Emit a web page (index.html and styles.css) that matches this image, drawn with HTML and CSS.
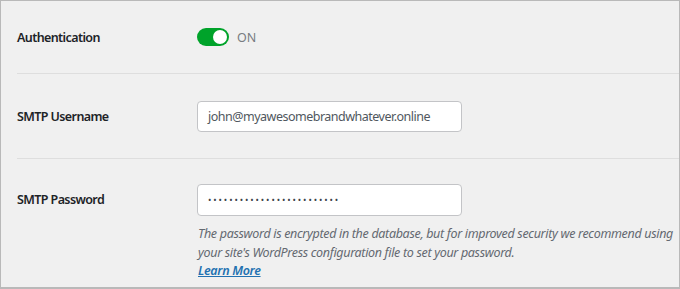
FILE: index.html
```html
<!DOCTYPE html>
<html>
<head>
<meta charset="utf-8">
<link rel="stylesheet" href="styles.css">
</head>
<body>
<div class="frame">
  <div class="row row-auth">
    <div class="label">Authentication</div>
    <div class="field">
      <span class="toggle"><span class="knob"></span></span>
      <span class="toggle-text">ON</span>
    </div>
  </div>
  <div class="row row-user">
    <div class="label">SMTP Username</div>
    <div class="field">
      <div class="input">john@myawesomebrandwhatever.online</div>
    </div>
  </div>
  <div class="row row-pass">
    <div class="label label-pass">SMTP Password</div>
    <div class="field">
      <div class="input input-pass">•••••••••••••••••••••••••</div>
      <p class="desc">The password is encrypted in the database, but for improved security we recommend using your site's WordPress configuration file to set your password.<br><a class="learn" href="#">Learn More</a></p>
    </div>
  </div>
</div>
</body>
</html>
```
FILE: styles.css
```css
html, body {
  margin: 0;
  padding: 0;
}
body {
  width: 680px;
  height: 289px;
  overflow: hidden;
  background: #f0f0f0;
  font-family: "Noto Sans", "Open Sans", sans-serif;
  font-size: 12px;
  color: #1d2327;
}
.frame {
  box-sizing: border-box;
  width: 680px;
  height: 289px;
  border: 1px solid #b9b9b9;
  border-bottom-width: 2px;
  padding-left: 16px;
  overflow: hidden;
}
.row {
  display: flex;
  align-items: flex-start;
  border-bottom: 1px solid #dedede;
}
.row-pass {
  border-bottom: none;
}
.row-auth {
  height: 72px;
  align-items: center;
}
.row-user {
  height: 84px;
  align-items: center;
}
.row-pass {
  padding-top: 25px;
}
.label {
  width: 180px;
  flex: none;
  font-weight: 600;
  font-size: 12.5px;
  letter-spacing: -0.6px;
}
.label-pass {
  line-height: 32px;
}
.field {
  display: flex;
  flex-direction: column;
  align-items: flex-start;
}
.row-auth .field {
  flex-direction: row;
  align-items: center;
}
.toggle {
  box-sizing: border-box;
  width: 32px;
  height: 18px;
  border-radius: 9px;
  background: #00a32a;
  display: flex;
  align-items: center;
  justify-content: flex-end;
  padding-right: 2px;
}
.knob {
  width: 14px;
  height: 14px;
  border-radius: 50%;
  background: #fff;
}
.toggle-text {
  margin-left: 8px;
  color: #787c82;
  font-size: 12.5px;
}
.input {
  box-sizing: border-box;
  width: 265px;
  height: 31px;
  border: 1px solid #c3c4c7;
  border-radius: 4px;
  background: #fff;
  padding: 0 10px;
  line-height: 29px;
  color: #50575e;
  font-size: 12.5px;
  letter-spacing: -0.5px;
}
.input-pass {
  height: 32px;
  line-height: 30px;
  font-size: 9px;
  letter-spacing: 1.9px;
  color: #3c434a;
}
.desc {
  margin: 9px 0 0 1px;
  width: 490px;
  font-style: italic;
  color: #646970;
  font-size: 12.5px;
  letter-spacing: -0.32px;
  line-height: 18.5px;
}
.learn {
  color: #2271b1;
  font-weight: 600;
  text-decoration: underline;
}
```
